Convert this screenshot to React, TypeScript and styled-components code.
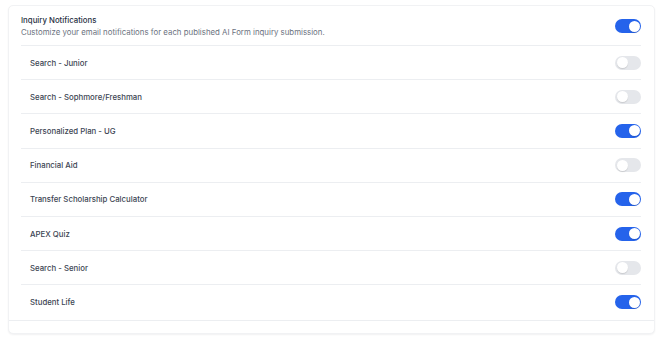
import { useState } from 'react';
import styled, { createGlobalStyle } from 'styled-components';

const GlobalStyle = createGlobalStyle`
  body {
    margin: 0;
    background: #ffffff;
    font-family: Inter, 'Noto Sans', sans-serif;
  }
`;

const Page = styled.div`
  padding: 5px 15px 8px 8px;
`;

const Card = styled.div`
  background: #fff;
  border: 1px solid #f1f2f4;
  border-radius: 5px;
  box-shadow: 0 1px 2px rgba(16, 24, 40, 0.06);
`;

const Body = styled.div`
  padding: 0 13px 0 12px;
`;

const Header = styled.div`
  display: flex;
  align-items: center;
  justify-content: space-between;
  padding: 8px 0 7px;
  border-bottom: 1px solid #eceef1;
`;

const Title = styled.div`
  font-size: 7.8px;
  line-height: 12px;
  font-weight: 500;
  color: #27303f;
`;

const Subtitle = styled.div`
  font-size: 7.85px;
  line-height: 12px;
  color: #6b7280;
`;

const Row = styled.div<{ last?: boolean }>`
  display: flex;
  align-items: center;
  justify-content: space-between;
  height: 34.2px;
  padding-left: 9px;
  box-sizing: border-box;
  border-bottom: ${({ last }) => (last ? 'none' : '1px solid #eceef1')};
`;

const Label = styled.span`
  font-size: 7.8px;
  font-weight: 500;
  color: #3b4452;
`;

const Footer = styled.div`
  height: 12px;
  border-top: 1px solid #eceef1;
`;

const Track = styled.button<{ on: boolean }>`
  position: relative;
  width: 26px;
  height: 14px;
  padding: 0;
  border: none;
  border-radius: 7px;
  cursor: pointer;
  background: ${({ on }) => (on ? '#2563eb' : '#e5e7eb')};
  flex-shrink: 0;
`;

const Knob = styled.span<{ on: boolean }>`
  position: absolute;
  top: 1.5px;
  left: ${({ on }) => (on ? '13.5px' : '1.5px')};
  width: 11px;
  height: 11px;
  border-radius: 50%;
  background: #fff;
  box-shadow: 0 1px 1px rgba(0, 0, 0, 0.12);
`;

const Toggle = ({ on, onClick }: { on: boolean; onClick: () => void }) => (
  <Track on={on} onClick={onClick} aria-pressed={on}>
    <Knob on={on} />
  </Track>
);

const initial = [
  { name: 'Search - Junior', on: false },
  { name: 'Search - Sophmore/Freshman', on: false },
  { name: 'Personalized Plan - UG', on: true },
  { name: 'Financial Aid', on: false },
  { name: 'Transfer Scholarship Calculator', on: true },
  { name: 'APEX Quiz', on: true },
  { name: 'Search - Senior', on: false },
  { name: 'Student Life', on: true },
];

export default function App() {
  const [all, setAll] = useState(true);
  const [forms, setForms] = useState(initial);

  const flip = (i: number) =>
    setForms(forms.map((f, j) => (j === i ? { ...f, on: !f.on } : f)));

  return (
    <Page>
      <GlobalStyle />
      <Card>
        <Body>
          <Header>
            <div>
              <Title>Inquiry Notifications</Title>
              <Subtitle>
                Customize your email notifications for each published AI Form inquiry submission.
              </Subtitle>
            </div>
            <Toggle on={all} onClick={() => setAll(!all)} />
          </Header>
          {forms.map((f, i) => (
            <Row key={f.name} last={i === forms.length - 1}>
              <Label>{f.name}</Label>
              <Toggle on={f.on} onClick={() => flip(i)} />
            </Row>
          ))}
        </Body>
        <Footer />
      </Card>
    </Page>
  );
}
